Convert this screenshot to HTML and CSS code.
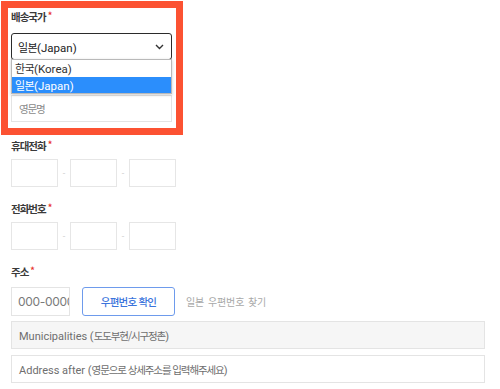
FILE: index.html
```html
<!DOCTYPE html>
<html lang="ko">
<head>
<meta charset="utf-8">
<link rel="stylesheet" href="styles.css">
</head>
<body>
<div class="page">
  <div class="highlight">
    <div class="label">배송국가<span class="req">*</span></div>
    <div class="select-wrap">
      <div class="select">
        <span><span class="k">일본</span>(Japan)</span>
        <svg class="chev" width="9" height="6" viewBox="0 0 9 6"><path d="M1 1 L4.5 4.5 L8 1" fill="none" stroke="#333" stroke-width="1.4"/></svg>
      </div>
      <div class="dropdown">
        <div class="opt"><span class="k">한국</span>(Korea)</div>
        <div class="opt sel"><span class="k">일본</span>(Japan)</div>
      </div>
    </div>
    <div class="input name"><span class="k">영문명</span></div>
  </div>

  <div class="field first">
    <div class="label">휴대전화<span class="req">*</span></div>
    <div class="phone">
      <div class="box"></div><span class="dash">-</span><div class="box"></div><span class="dash">-</span><div class="box"></div>
    </div>
  </div>

  <div class="field">
    <div class="label">전화번호<span class="req">*</span></div>
    <div class="phone">
      <div class="box"></div><span class="dash">-</span><div class="box"></div><span class="dash">-</span><div class="box"></div>
    </div>
  </div>

  <div class="field">
    <div class="label">주소<span class="req">*</span></div>
    <div class="zip-row">
      <div class="input zip"><span class="zip-text">000-0000</span></div>
      <div class="btn">우편번호 확인</div>
      <div class="hint">일본 우편번호 찾기</div>
    </div>
    <div class="input wide muted"><span>Municipalities (<span class="k">도도부현/시구정촌</span>)</span></div>
    <div class="input wide addr"><span>Address after (<span class="k">영문으로 상세주소를 입력해주세요</span>)</span></div>
  </div>
</div>
</body>
</html>
```

FILE: styles.css
```css
* { box-sizing: border-box; }
html, body { margin: 0; padding: 0; background: #fff; }
body {
  font-family: Roboto, "Noto Sans CJK KR", sans-serif;
  font-size: 11px;
  color: #333;
  width: 500px;
  height: 389px;
  overflow: hidden;
}
.page { padding: 0 11px; }
.k {
  font-family: "Noto Sans CJK KR", sans-serif;
  font-size: 10.5px;
  letter-spacing: -1.1px;
}

.highlight {
  margin: 1px 0 0 -10px;
  width: 182px;
  border: 7px solid #fc5232;
  padding: 1px 4px 6px 3px;
}
.label {
  font-family: "Noto Sans CJK KR", sans-serif;
  font-size: 10.5px;
  line-height: 16px;
  height: 16px;
  font-weight: 600;
  letter-spacing: -1px;
  color: #3a3a3a;
}
.req {
  color: #e8352c;
  font-size: 9px;
  line-height: 0;
  vertical-align: 2px;
  margin-left: 2px;
}

.select-wrap { position: relative; margin-top: 8px; }
.select {
  height: 27px;
  border: 1px solid #2b2b2b;
  border-radius: 3px;
  display: flex;
  align-items: center;
  justify-content: space-between;
  padding: 0 6px 0 6px;
  font-size: 11.5px;
  color: #222;
}
.select .k, .opt .k { font-size: 11px; letter-spacing: -0.6px; }
.chev { margin-right: 1px; }
.dropdown {
  position: absolute;
  left: 0; right: 0;
  top: 26px;
  background: #fff;
  border: 1px solid #b9b9b9;
  box-shadow: 0 1px 3px rgba(0,0,0,0.2);
  z-index: 2;
}
.opt {
  height: 16.5px;
  line-height: 16px;
  padding-left: 3px;
  font-size: 11.5px;
  color: #333;
}
.opt.sel { background: #2b8efc; color: #fff; }

.input {
  height: 27px;
  border: 1px solid #e4e4e4;
  display: flex;
  align-items: center;
  padding-left: 7px;
  font-size: 11px;
  color: #8a8a8a;
}
.input.name { margin-top: 35px; }

.field { margin-top: 14px; }
.field.first { margin-top: 3px; }
.phone {
  display: flex;
  align-items: center;
  margin-top: 5px;
}
.box {
  width: 47px;
  height: 28px;
  border: 1px solid #e6e6e6;
}
.dash {
  width: 12px;
  text-align: center;
  color: #d0d0d0;
  font-size: 9px;
}

.zip-row {
  display: flex;
  align-items: center;
  margin-top: 7px;
}
.input.zip {
  width: 59px;
  height: 29px;
  padding-left: 6px;
  overflow: hidden;
  color: #7a7a7a;
  font-family: Inter, sans-serif;
  font-size: 12px;
  letter-spacing: -0.3px;
}
.zip-text { white-space: nowrap; flex: none; }
.btn {
  margin-left: 12px;
  width: 93px;
  height: 29px;
  border: 1px solid #6e9bec;
  border-radius: 3px;
  display: flex;
  align-items: center;
  justify-content: center;
  color: #3b74dc;
  font-family: "Noto Sans CJK KR", sans-serif;
  font-size: 10.5px;
  font-weight: 500;
  letter-spacing: -0.8px;
}
.hint {
  margin-left: 11px;
  color: #a8a8a8;
  font-family: "Noto Sans CJK KR", sans-serif;
  font-size: 10px;
  letter-spacing: -0.1px;
  word-spacing: 1px;
}
.input.wide {
  width: 474px;
  height: 28px;
  color: #6e6e6e;
}
.input.muted {
  margin-top: 5px;
  background: #f6f6f6;
}
.input.addr { margin-top: 6px; }
```
